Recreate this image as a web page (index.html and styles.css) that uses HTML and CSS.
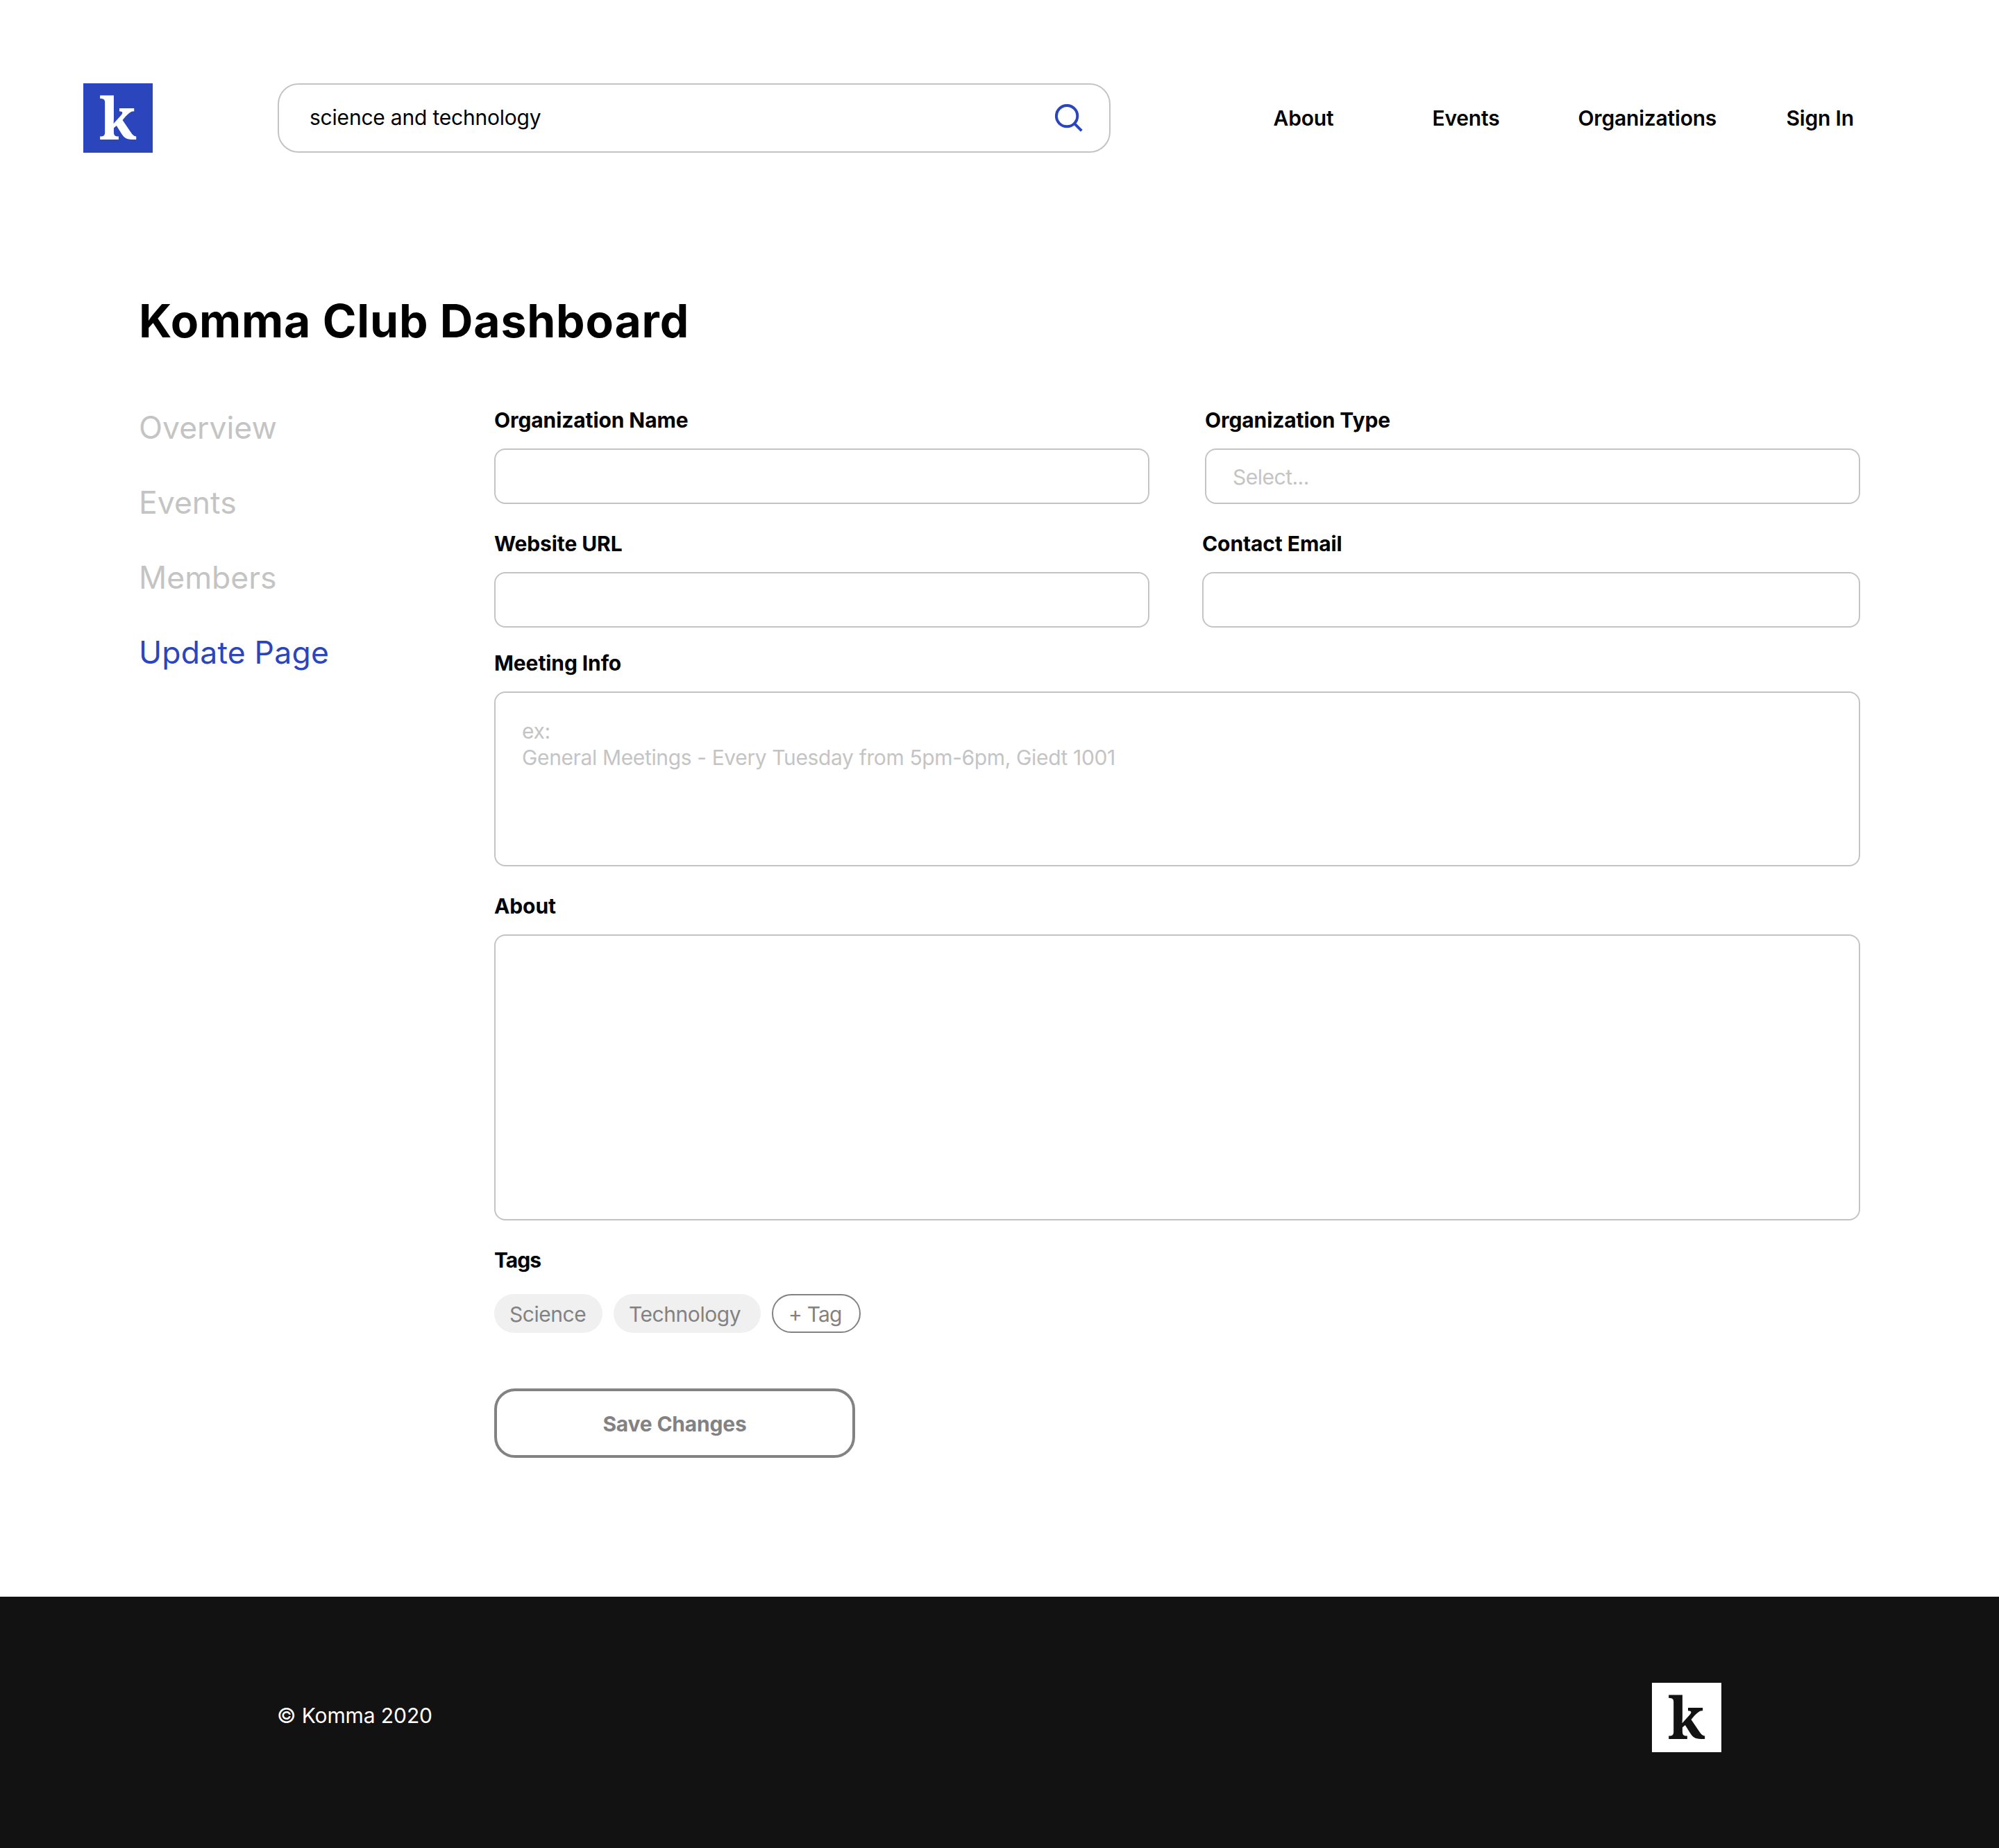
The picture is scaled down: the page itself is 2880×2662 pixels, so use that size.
FILE: index.html
```
<!DOCTYPE html>
<html lang="en">
<head>
<meta charset="utf-8">
<title>Komma Club Dashboard</title>
<link rel="stylesheet" href="styles.css">
</head>
<body>
<header class="header">
  <svg class="logo logo-blue" viewBox="0 0 100 100" role="img" aria-label="Komma">
    <rect width="100" height="100"/>
    <text x="49.5" y="81">k</text>
  </svg>
  <form class="search">
    <input class="search-input" type="text" value="science and technology" aria-label="Search">
    <svg class="search-icon" viewBox="0 0 40 40" fill="none" stroke="#2b45bd" stroke-width="4">
      <circle cx="17.1" cy="17.1" r="15.2"/>
      <path d="M27.6 27.6 38.3 38.3"/>
    </svg>
  </form>
  <nav class="nav">
    <a>About</a>
    <a>Events</a>
    <a>Organizations</a>
    <a>Sign In</a>
  </nav>
</header>

<main class="main">
  <h1 class="title">Komma Club Dashboard</h1>
  <div class="dashboard">
    <nav class="sidebar">
      <a>Overview</a>
      <a>Events</a>
      <a>Members</a>
      <a class="active">Update Page</a>
    </nav>
    <form class="form">
      <div class="row row-org">
        <label class="field"><span class="label">Organization Name</span><input class="input" type="text"></label>
        <label class="field"><span class="label">Organization Type</span><input class="input" type="text" placeholder="Select..."></label>
      </div>
      <div class="row row-contact">
        <label class="field"><span class="label">Website URL</span><input class="input" type="text"></label>
        <label class="field"><span class="label">Contact Email</span><input class="input" type="text"></label>
      </div>
      <label class="field field-meeting"><span class="label">Meeting Info</span><textarea class="input" placeholder="ex:&#10;General Meetings - Every Tuesday from 5pm-6pm, Giedt 1001"></textarea></label>
      <label class="field field-about"><span class="label">About</span><textarea class="input"></textarea></label>
      <div class="tags-field">
        <span class="label label-tags">Tags</span>
        <div class="tags">
          <span class="tag tag-science">Science</span>
          <span class="tag tag-technology">Technology</span>
          <span class="tag tag-add">+ Tag</span>
        </div>
      </div>
      <button class="save" type="button">Save Changes</button>
    </form>
  </div>
</main>

<footer class="footer">
  <span class="copyright">© Komma 2020</span>
  <svg class="logo logo-white" viewBox="0 0 100 100" role="img" aria-label="Komma">
    <rect width="100" height="100"/>
    <text x="49.5" y="81">k</text>
  </svg>
</footer>
</body>
</html>
```
FILE: styles.css
```
* {
  box-sizing: border-box;
}

body {
  margin: 0;
  display: flex;
  flex-direction: column;
  min-height: 2662px;
  background: #fff;
  color: #000;
  font: 400 30px/36px Inter, "Liberation Sans", sans-serif;
}

input,
textarea,
button {
  margin: 0;
  font: inherit;
  color: inherit;
  outline: none;
}

/* Header */
.header {
  display: flex;
  align-items: center;
  padding: 120px 0 0 120px;
}

.logo {
  display: block;
  flex: none;
  width: 100px;
  height: 100px;
  overflow: visible;
}

.logo text {
  font: 700 84px "Noto Serif", "Noto Serif CJK SC", serif;
  text-anchor: middle;
}

.logo-blue rect { fill: #2b45bd; }
.logo-blue text { fill: #fff; }
.logo-white rect { fill: #fff; }
.logo-white text { fill: #121212; }

.search {
  display: flex;
  align-items: center;
  width: 1200px;
  height: 100px;
  margin-left: 180px;
  padding: 0 38px 0 44px;
  border: 2px solid #c4c4c4;
  border-radius: 30px;
}

.search-input {
  flex: 1;
  padding: 0 0 2px;
  border: 0;
  background: none;
  letter-spacing: -0.21px;
}

.search-icon {
  width: 40px;
  height: 40px;
}

.nav {
  display: grid;
  grid-template-columns: 229px 210px 300px auto;
  margin-left: 234.5px;
  padding-bottom: 1px;
  font-weight: 600;
  letter-spacing: -0.2px;
}

/* Dashboard */
.title {
  margin: 202px 0 0 200px;
  font-size: 66px;
  line-height: 80px;
  font-weight: 700;
  letter-spacing: 0.82px;
}

.dashboard {
  display: grid;
  grid-template-columns: 512px 1968px;
  margin: 60px 0 0 200px;
}

.sidebar {
  display: flex;
  flex-direction: column;
  font-size: 44.5px;
  line-height: 108px;
  color: #c4c4c4;
}

.sidebar .active {
  color: #2b45bd;
  letter-spacing: 0.2px;
}

.form {
  display: flex;
  flex-direction: column;
  align-items: stretch;
  padding-top: 25px;
}

.row {
  display: grid;
  justify-content: space-between;
}

.row-org { grid-template-columns: 944px 944px; }
.row-contact { grid-template-columns: 944px 948px; margin-top: 39px; }
.field-meeting { margin-top: 33px; }
.field-about { margin-top: 39px; }

.field {
  display: flex;
  flex-direction: column;
  gap: 23px;
}

.label {
  font-weight: 700;
  letter-spacing: -0.1px;
}

.input {
  display: block;
  width: 100%;
  height: 80px;
  padding: 2px 38px 0;
  border: 2px solid #c4c4c4;
  border-radius: 16px;
  background: #fff;
  resize: none;
  letter-spacing: -0.5px;
}

.input::placeholder {
  color: #c4c4c4;
  opacity: 1;
}

textarea.input {
  padding: 36px 38px;
  line-height: 38px;
  letter-spacing: -0.37px;
}

.field-meeting .input { height: 252px; }
.field-about .input { height: 412px; }

.tags-field {
  display: flex;
  flex-direction: column;
  gap: 31px;
  margin-top: 39px;
}

.label-tags {
  letter-spacing: -1px;
}

.tags {
  display: flex;
  gap: 16px;
}

.tag {
  height: 56px;
  padding: 11px 0 0 22px;
  border-radius: 28px;
  background: #f0f0f0;
  color: #828282;
  letter-spacing: -0.45px;
}

.tag-science { width: 156px; }

.tag-technology {
  width: 212px;
}

.tag-add {
  width: 128px;
  padding-top: 9px;
  border: 2px solid #828282;
  background: none;
  letter-spacing: -0.8px;
}

.save {
  width: 520px;
  height: 100px;
  margin-top: 80px;
  padding: 2px 0 0;
  border: 4px solid #828282;
  border-radius: 30px;
  background: #fff;
  color: #828282;
  font-weight: 700;
  letter-spacing: -0.2px;
}

/* Footer */
.footer {
  display: flex;
  justify-content: space-between;
  height: 362px;
  margin-top: auto;
  padding: 124px 400px 0 399px;
  background: #121212;
  color: #fff;
}

.copyright {
  margin-top: 29px;
  letter-spacing: -0.1px;
}
```
